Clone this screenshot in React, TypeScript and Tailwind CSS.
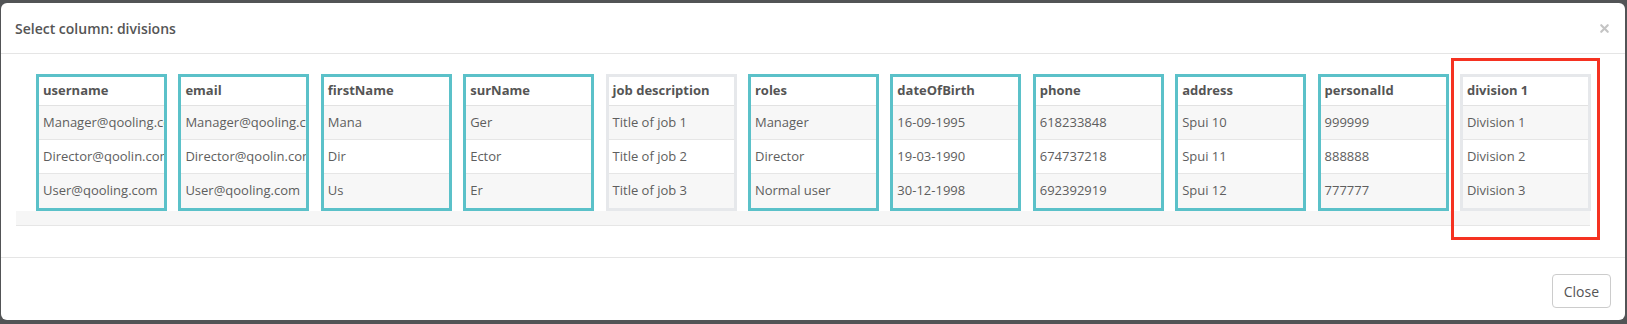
import { X } from 'lucide-react';

interface Column {
  title: string;
  values: string[];
  selectable: boolean;
}

const columns: Column[] = [
  { title: 'username', values: ['Manager@qooling.com', 'Director@qoolin.com', 'User@qooling.com'], selectable: true },
  { title: 'email', values: ['Manager@qooling.com', 'Director@qoolin.com', 'User@qooling.com'], selectable: true },
  { title: 'firstName', values: ['Mana', 'Dir', 'Us'], selectable: true },
  { title: 'surName', values: ['Ger', 'Ector', 'Er'], selectable: true },
  { title: 'job description', values: ['Title of job 1', 'Title of job 2', 'Title of job 3'], selectable: false },
  { title: 'roles', values: ['Manager', 'Director', 'Normal user'], selectable: true },
  { title: 'dateOfBirth', values: ['16-09-1995', '19-03-1990', '30-12-1998'], selectable: true },
  { title: 'phone', values: ['618233848', '674737218', '692392919'], selectable: true },
  { title: 'address', values: ['Spui 10', 'Spui 11', 'Spui 12'], selectable: true },
  { title: 'personalId', values: ['999999', '888888', '777777'], selectable: true },
  { title: 'division 1', values: ['Division 1', 'Division 2', 'Division 3'], selectable: false },
];

function ColumnBox({ column }: { column: Column }) {
  return (
    <div
      className={
        column.selectable
          ? 'w-[131px] shrink-0 border-[3px] border-[#5bc1c9] overflow-hidden'
          : 'w-[131px] shrink-0 border-[3px] border-[#e6e8eb] overflow-hidden'
      }
    >
      <div className="h-[29px] flex items-center pl-[4px] border-b border-[#e2e2e2] bg-white text-[13px] font-bold text-[#555] whitespace-nowrap">
        {column.title}
      </div>
      {column.values.map((value, i) => (
        <div
          key={i}
          className={
            (i % 2 === 0 ? 'bg-[#f7f7f7] ' : 'bg-white ') +
            (i < column.values.length - 1 ? 'border-b border-[#e6e6e6] ' : '') +
            'h-[34px] flex items-center pl-[4px] text-[13px] text-[#5e5e5e] whitespace-nowrap overflow-hidden'
          }
        >
          {value}
        </div>
      ))}
    </div>
  );
}

export default function App() {
  return (
    <div className="w-[1627px] h-[324px] bg-[#525456] pt-[3px] pl-[1px] pr-[2px] overflow-hidden font-['Open_Sans',sans-serif]">
      <div className="relative bg-white rounded-[6px] h-[317px] flex flex-col">
        <div className="h-[51px] shrink-0 border-b border-[#e5e5e5] flex items-center justify-between pl-[14px] pr-[14px]">
          <h4 className="text-[14px] font-semibold text-[#555]">Select column: divisions</h4>
          <X className="w-[13px] h-[13px] text-[#c4c4c4]" strokeWidth={4} />
        </div>

        <div className="h-[203px] shrink-0 pt-[20px] pl-[15px] pr-[35px]">
          <div className="flex gap-[11.4px] pl-[20px]">
            {columns.map((column) => (
              <ColumnBox key={column.title} column={column} />
            ))}
          </div>
          <div className="h-[15px] bg-[#f6f6f6] border-b border-[#e6e6e6]" />
        </div>

        <div className="h-[63px] shrink-0 border-t border-[#e5e5e5] flex items-start justify-end pt-[16px] pr-[14px]">
          <button className="h-[34px] px-[11px] border border-[#cccccc] rounded-[4px] bg-white text-[14px] text-[#555]">
            Close
          </button>
        </div>

        <div className="absolute left-[1450px] top-[55px] w-[149px] h-[182px] border-[3px] border-[#f53221]" />
      </div>
    </div>
  );
}
